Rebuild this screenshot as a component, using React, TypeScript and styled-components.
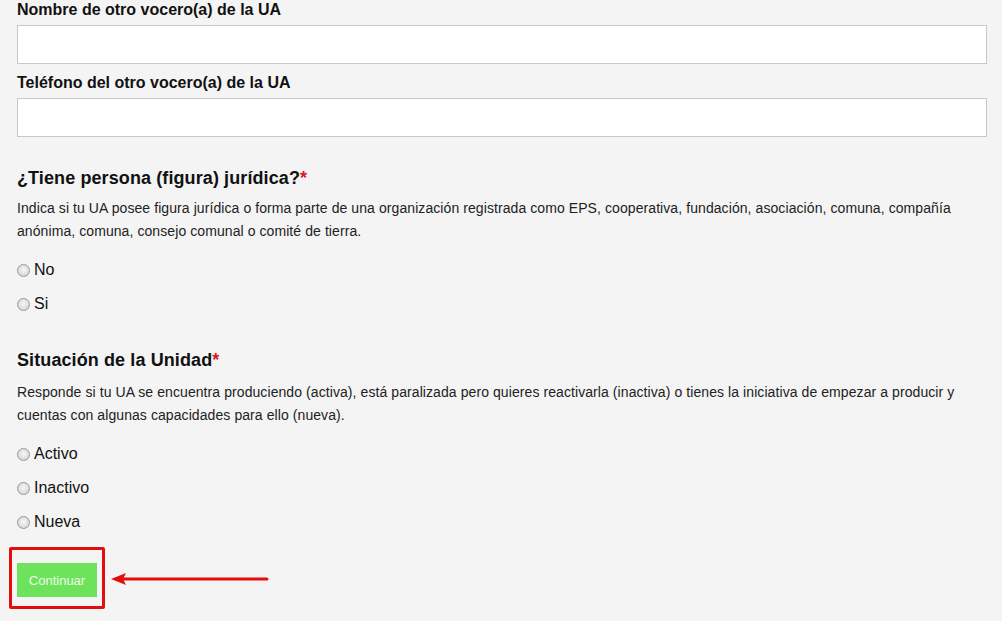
import React from "react";
import styled, { createGlobalStyle } from "styled-components";

const Global = createGlobalStyle`
  html, body { margin: 0; padding: 0; background: #f4f4f4; }
  body { font-family: "Liberation Sans", Arial, sans-serif; color: #111; }
`;

const Page = styled.form`
  display: flex;
  flex-direction: column;
  padding: 0 15px 0 17px;
  background: #f4f4f4;
  min-height: 621px;
  box-sizing: border-box;
`;

const FieldLabel = styled.label`
  display: block;
  font-weight: bold;
  font-size: 16px;
  line-height: 20px;
  color: #111;
  margin-bottom: 5px;
`;

const TextInput = styled.input`
  display: block;
  width: 100%;
  height: 39px;
  box-sizing: border-box;
  border: 1px solid #c8c8c8;
  background: #fff;
  margin: 0 0 9px 0;
  padding: 0 8px;
  font: 14px "Liberation Sans", Arial, sans-serif;
`;

const Heading = styled.h3<{ $top: number }>`
  margin: ${(p) => p.$top}px 0 0 0;
  font-size: 18px;
  line-height: 24px;
  font-weight: bold;
  letter-spacing: 0.1px;
  color: #111;
`;

const Req = styled.span`
  color: #d91b1b;
`;

const Desc = styled.p<{ $top: number }>`
  margin: ${(p) => p.$top}px 0 17px 0;
  font-size: 14px;
  line-height: 23px;
  letter-spacing: 0.08px;
  color: #222;
`;

const Options = styled.div`
  display: flex;
  flex-direction: column;
  gap: 14px;
`;

const Option = styled.label`
  display: flex;
  align-items: center;
  gap: 4px;
  font-size: 16px;
  line-height: 20px;
  color: #111;
`;

const Radio = styled.input`
  appearance: none;
  -webkit-appearance: none;
  margin: 0;
  width: 13px;
  height: 13px;
  border-radius: 50%;
  border: 1px solid #9a9a9a;
  box-sizing: border-box;
  background: radial-gradient(circle at 50% 45%, #f8f8f8 0%, #e2e2e2 50%, #c9c9c9 100%);
`;

const ButtonArea = styled.div`
  position: relative;
  margin-top: 31px;
  align-self: flex-start;
`;

const SubmitButton = styled.button`
  display: block;
  width: 80px;
  height: 34px;
  border: none;
  background: #6ce35a;
  color: #eefbe9;
  font: 13px "Liberation Sans", Arial, sans-serif;
  padding: 0;
`;

const Highlight = styled.div`
  position: absolute;
  left: -8px;
  top: -16px;
  width: 96px;
  height: 62px;
  box-sizing: border-box;
  border: 3px solid #e40d0d;
  border-radius: 2px;
  pointer-events: none;
`;

const Arrow = styled.svg`
  position: absolute;
  left: 93px;
  top: 8px;
`;

export default function App() {
  return (
    <>
      <Global />
      <Page onSubmit={(e) => e.preventDefault()}>
        <FieldLabel>Nombre de otro vocero(a) de la UA</FieldLabel>
        <TextInput type="text" />
        <FieldLabel>Teléfono del otro vocero(a) de la UA</FieldLabel>
        <TextInput type="text" />

        <Heading $top={20}>
          ¿Tiene persona (figura) jurídica?<Req>*</Req>
        </Heading>
        <Desc $top={7}>
          Indica si tu UA posee figura jurídica o forma parte de una organización registrada como EPS,
          cooperativa, fundación, asociación, comuna, compañía anónima, comuna, consejo comunal o comité
          de tierra.
        </Desc>
        <Options>
          <Option>
            <Radio type="radio" name="juridica" />
            No
          </Option>
          <Option>
            <Radio type="radio" name="juridica" />
            Si
          </Option>
        </Options>

        <Heading $top={34}>
          Situación de la Unidad<Req>*</Req>
        </Heading>
        <Desc $top={9}>
          Responde si tu UA se encuentra produciendo (activa), está paralizada pero quieres reactivarla
          (inactiva) o tienes la iniciativa de empezar a producir y cuentas con algunas capacidades para
          ello (nueva).
        </Desc>
        <Options>
          <Option>
            <Radio type="radio" name="situacion" />
            Activo
          </Option>
          <Option>
            <Radio type="radio" name="situacion" />
            Inactivo
          </Option>
          <Option>
            <Radio type="radio" name="situacion" />
            Nueva
          </Option>
        </Options>

        <ButtonArea>
          <SubmitButton type="submit">Continuar</SubmitButton>
          <Highlight />
          <Arrow width="160" height="18" viewBox="0 0 160 18">
            <line x1="12" y1="8" x2="157" y2="8" stroke="#e40d0d" strokeWidth="3" strokeLinecap="round" />
            <polygon points="1,8 16,2 13,8 16,14" fill="#e40d0d" />
          </Arrow>
        </ButtonArea>
      </Page>
    </>
  );
}
